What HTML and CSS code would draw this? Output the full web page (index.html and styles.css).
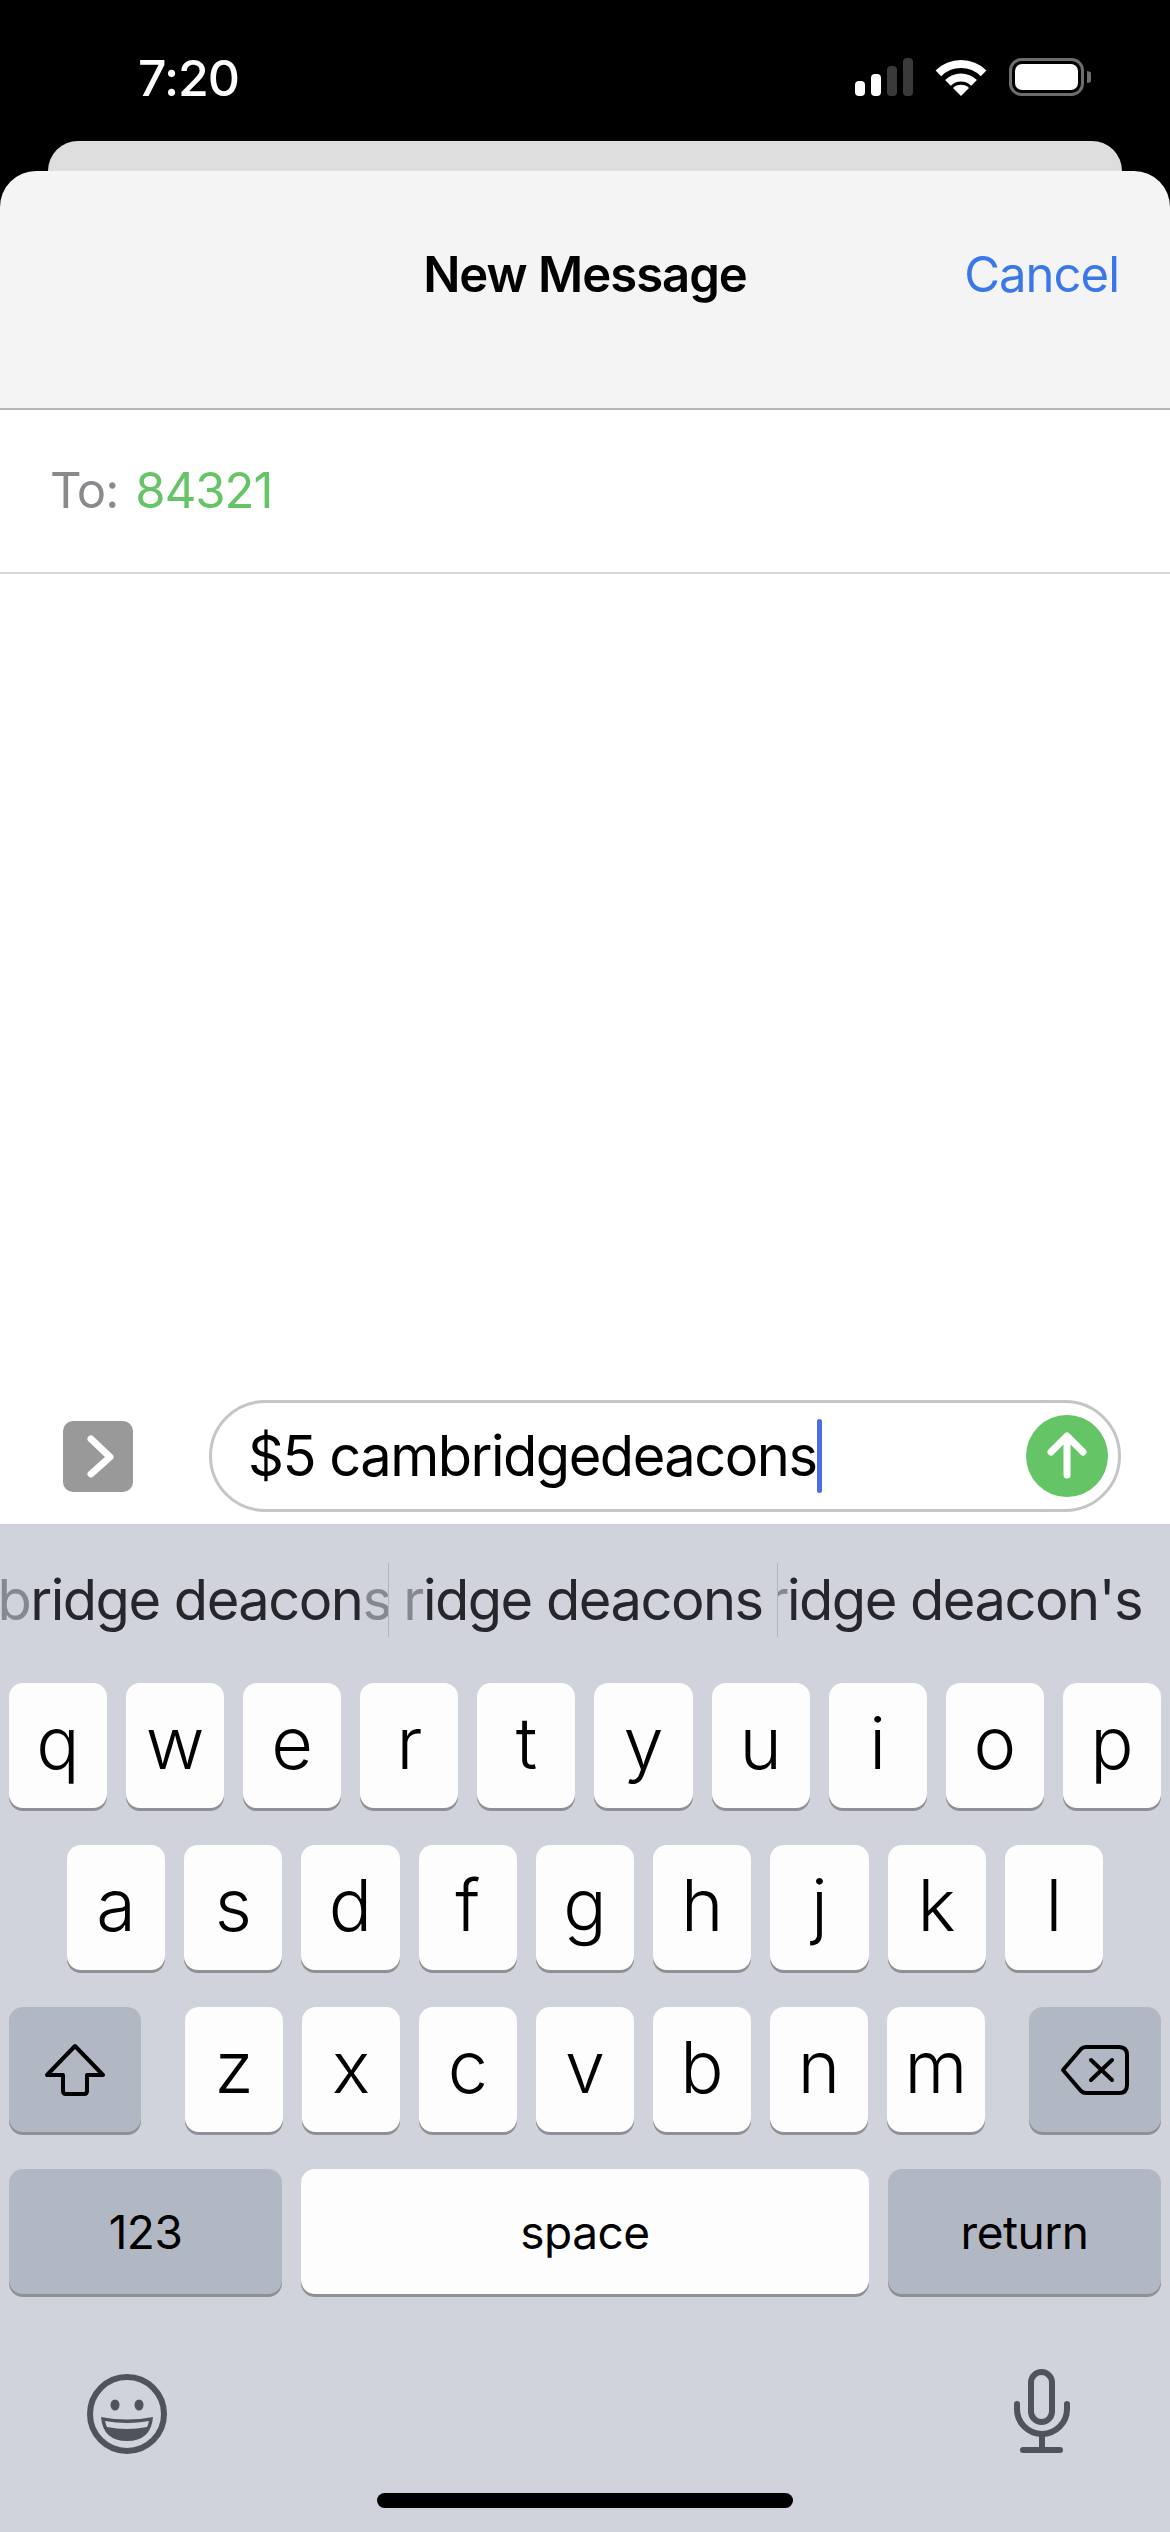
FILE: index.html
```html
<!DOCTYPE html>
<html lang="en">
<head>
	<meta charset="utf-8">
	<meta name="viewport" content="width=device-width, initial-scale=1.0">
	<title>New Message</title>
	<link rel="stylesheet" href="styles.css">
</head>
<body>
	<div class="status">
		<span class="time">7:20</span>
		<div class="status-icons">
			<svg width="58" height="38" viewBox="0 0 58 38">
				<rect x="0" y="23" width="10" height="15" rx="4" fill="#fff"/>
				<rect x="16" y="16" width="10" height="22" rx="4" fill="#fff"/>
				<rect x="32" y="8" width="10" height="30" rx="4" fill="#3a3a3a"/>
				<rect x="48" y="0" width="10" height="38" rx="4" fill="#3a3a3a"/>
			</svg>
			<svg width="52" height="40" viewBox="0 0 52 40">
				<path d="M3.4 15.4A32 32 0 0 1 48.6 15.4" fill="none" stroke="#fff" stroke-width="8"/>
				<path d="M12.9 24.9A18.5 18.5 0 0 1 39.1 24.9" fill="none" stroke="#fff" stroke-width="8"/>
				<path d="M26 38L18 30A11.3 11.3 0 0 1 34 30Z" fill="#fff"/>
			</svg>
			<svg width="82" height="38" viewBox="0 0 82 38">
				<rect x="1.5" y="1.5" width="72" height="35" rx="11" fill="none" stroke="#6e6e6e" stroke-width="3"/>
				<rect x="6" y="6" width="63" height="26" rx="7" fill="#fff"/>
				<path d="M78 13A6 6 0 0 1 78 25Z" fill="#6e6e6e"/>
			</svg>
		</div>
	</div>

	<div class="back-sheet"></div>

	<div class="header">
		<span class="title">New Message</span>
		<span class="cancel">Cancel</span>
	</div>

	<div class="to-row">
		<span class="to-label">To:</span>
		<span class="to-number">84321</span>
	</div>

	<div class="messages"></div>

	<div class="compose">
		<svg class="apps" width="70" height="71" viewBox="0 0 70 71">
			<rect width="70" height="71" rx="10" fill="#999"/>
			<path d="M28 18L47 36L28 53" fill="none" stroke="#fff" stroke-width="7" stroke-linecap="round" stroke-linejoin="round"/>
		</svg>
		<div class="pill">
			<span class="pill-text">$5 cambridgedeacons<span class="caret"></span></span>
			<svg width="82" height="82" viewBox="0 0 82 82">
				<circle cx="41" cy="41" r="41" fill="#65c466"/>
				<path d="M41 60V22M25 37L41 21L57 37" fill="none" stroke="#fff" stroke-width="7" stroke-linecap="round" stroke-linejoin="round"/>
			</svg>
		</div>
	</div>

	<div class="keyboard">
		<div class="suggestions">
			<div class="suggestion"><span class="faded">b</span>ridge deacon<span class="faded">s</span></div>
			<div class="suggestion"><span class="faded">r</span>idge deacons</div>
			<div class="suggestion last"><span class="faded">r</span>idge deacon's</div>
		</div>

		<div class="row">
			<div class="key">q</div><div class="key">w</div><div class="key">e</div><div class="key">r</div><div class="key">t</div>
			<div class="key">y</div><div class="key">u</div><div class="key">i</div><div class="key">o</div><div class="key">p</div>
		</div>
		<div class="row row-home">
			<div class="key">a</div><div class="key">s</div><div class="key">d</div><div class="key">f</div><div class="key">g</div>
			<div class="key">h</div><div class="key">j</div><div class="key">k</div><div class="key">l</div>
		</div>
		<div class="row row-shift">
			<div class="key key-dark key-side">
				<svg width="62" height="54" viewBox="0 0 62 54">
					<path d="M31 3L3 32H19V48Q19 51 22 51H40Q43 51 43 48V32H59Z" fill="none" stroke="#000" stroke-width="4" stroke-linejoin="round"/>
				</svg>
			</div>
			<div class="letters">
				<div class="key">z</div><div class="key">x</div><div class="key">c</div><div class="key">v</div>
				<div class="key">b</div><div class="key">n</div><div class="key">m</div>
			</div>
			<div class="key key-dark key-side">
				<svg width="70" height="52" viewBox="0 0 70 52">
					<path d="M3 26L21 5Q23 3 26 3H59Q67 3 67 11V41Q67 49 59 49H26Q23 49 21 47Z" fill="none" stroke="#000" stroke-width="4" stroke-linejoin="round"/>
					<path d="M31 16L52 36M52 16L31 36" fill="none" stroke="#000" stroke-width="4" stroke-linecap="round"/>
				</svg>
			</div>
		</div>
		<div class="row row-bottom">
			<div class="key key-dark key-label key-num">123</div>
			<div class="key key-label key-space">space</div>
			<div class="key key-dark key-label key-num">return</div>
		</div>

		<div class="kb-tools">
			<svg class="emoji" width="84" height="84" viewBox="0 0 84 84">
				<circle cx="42" cy="42" r="37" fill="none" stroke="#50535c" stroke-width="6"/>
				<ellipse cx="30" cy="33" rx="4.5" ry="5.5" fill="#50535c"/>
				<ellipse cx="54" cy="33" rx="4.5" ry="5.5" fill="#50535c"/>
				<path d="M16 45Q42 50 68 45Q66 69 42 69Q18 69 16 45Z" fill="#50535c"/>
				<path d="M20 49Q42 53 64 49Q63 53 62 55Q42 59 22 55Q21 53 20 49Z" fill="#d0d3db"/>
			</svg>
			<svg width="60" height="88" viewBox="0 0 60 88">
				<rect x="19" y="5" width="21" height="50" rx="10.5" fill="none" stroke="#50535c" stroke-width="6"/>
				<path d="M5 37V42A25 25 0 0 0 55 42V37M30 67V83M11 83H48" fill="none" stroke="#50535c" stroke-width="6" stroke-linecap="round"/>
			</svg>
		</div>
		<div class="home-bar"></div>
	</div>
</body>
</html>
```

FILE: styles.css
```css
html, body {
	margin: 0;
	height: 2532px;
}

body {
	display: flex;
	flex-direction: column;
	width: 1170px;
	background-color: #000;
	font-family: Inter, "Liberation Sans", sans-serif;
	overflow: hidden;
}

/* status bar */
.status {
	display: flex;
	justify-content: space-between;
	height: 141px;
	box-sizing: border-box;
	padding: 58px 79px 0 138px;
}

.time {
	color: #fff;
	font-size: 50px;
	font-weight: 500;
	line-height: 40px;
	letter-spacing: -1px;
}

.status-icons {
	display: flex;
	align-items: flex-start;
	gap: 22px;
}

.back-sheet {
	height: 30px;
	margin: 0 48px;
	background-color: #dedede;
	border-radius: 30px 30px 0 0;
}

/* header */
.header {
	display: flex;
	justify-content: center;
	position: relative;
	height: 239px;
	box-sizing: border-box;
	padding-top: 74px;
	background-color: #f4f4f4;
	border-radius: 36px 36px 0 0;
	border-bottom: 2px solid #b4b4b6;
}

.title {
	font-size: 49px;
	font-weight: 600;
	line-height: 60px;
	letter-spacing: -1px;
	color: #000;
}

.cancel {
	position: absolute;
	right: 51px;
	top: 74px;
	font-size: 49px;
	line-height: 60px;
	letter-spacing: -1px;
	color: #3b78e7;
}

.to-row {
	display: flex;
	align-items: center;
	gap: 17px;
	height: 164px;
	box-sizing: border-box;
	padding: 0 0 2px 50px;
	background-color: #fff;
	border-bottom: 2px solid #d6d6d8;
	font-size: 49px;
	letter-spacing: -1px;
}

.to-label {
	color: #8a8a8e;
}

.to-number {
	color: #65c466;
}

.messages {
	flex: 1;
	background-color: #fff;
}

/* compose row */
.compose {
	display: flex;
	align-items: center;
	gap: 76px;
	padding: 0 49px 12px 63px;
	background-color: #fff;
}

.apps {
	flex-shrink: 0;
}

.pill {
	flex: 1;
	display: flex;
	align-items: center;
	justify-content: space-between;
	height: 112px;
	box-sizing: border-box;
	padding: 0 10px 0 36px;
	border: 3px solid #c5c5c7;
	border-radius: 56px;
}

.pill-text {
	display: flex;
	align-items: center;
	font-size: 56px;
	letter-spacing: -1.5px;
	color: #000;
}

.caret {
	width: 5px;
	height: 74px;
	border-radius: 3px;
	background-color: #4b6ee0;
}

/* keyboard */
.keyboard {
	height: 1008px;
	box-sizing: border-box;
	padding-top: 39px;
	background-color: #d0d3db;
}

.suggestions {
	display: flex;
	height: 74px;
	margin-bottom: 46px;
}

.suggestion {
	width: 389px;
	display: flex;
	align-items: center;
	justify-content: center;
	overflow: hidden;
	white-space: pre;
	font-size: 56px;
	letter-spacing: -1.5px;
	color: #25272c;
	border-right: 1px solid #b0b3ba;
	box-sizing: border-box;
}

.suggestion.last {
	flex: 1;
	justify-content: flex-end;
	padding-right: 28px;
	border-right: none;
}

.faded {
	color: #85888e;
}

.row {
	display: flex;
	gap: 19px;
	height: 125px;
	padding: 0 9px;
	margin-bottom: 37px;
}

.row-home {
	padding: 0 67px;
}

.row-shift {
	justify-content: space-between;
}

.letters {
	display: flex;
	gap: 19px;
	width: 800px;
}

.key {
	flex: 1;
	display: flex;
	align-items: center;
	justify-content: center;
	padding-bottom: 6px;
	box-sizing: border-box;
	background-color: #fdfdfd;
	border-radius: 14px;
	box-shadow: 0 3px 0 #8f9095;
	font-size: 72px;
	font-weight: 300;
	color: #000;
}

.key-dark {
	background-color: #b2b8c3;
}

.key-side {
	flex: 0 0 132px;
	padding-bottom: 0;
}

.key-label {
	font-size: 46px;
	font-weight: 400;
	letter-spacing: -0.5px;
	padding-bottom: 0;
}

.key-num {
	flex: 0 0 273px;
}

.key-space {
	flex: 0 0 568px;
}

.kb-tools {
	display: flex;
	justify-content: space-between;
	align-items: flex-start;
	padding: 36px 98px 0 85px;
	height: 90px;
}

.emoji {
	margin-top: 5px;
}

.home-bar {
	width: 416px;
	height: 15px;
	margin: 36px auto 0;
	border-radius: 8px;
	background-color: #000;
}
```
